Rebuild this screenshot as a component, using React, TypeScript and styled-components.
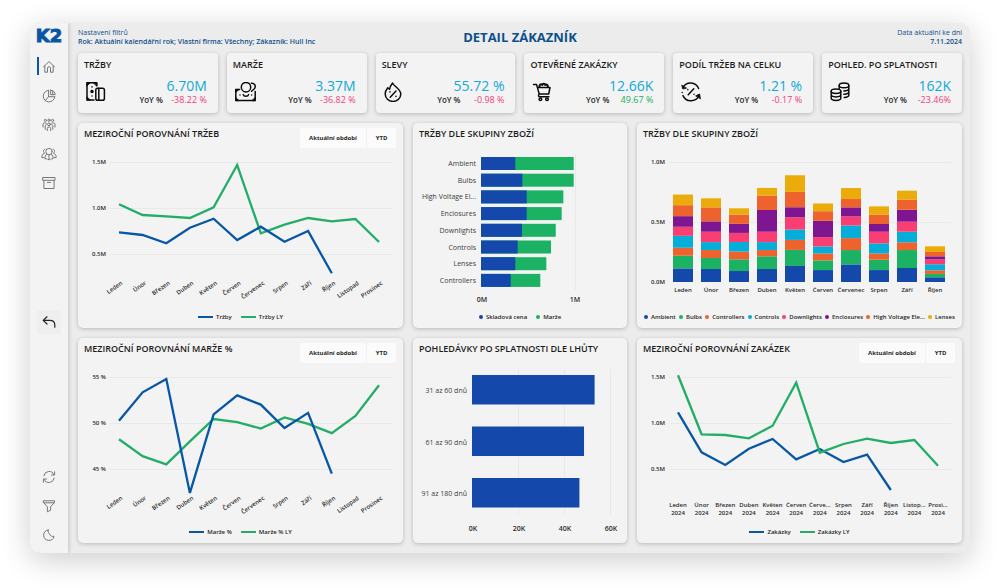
import React from 'react';
import styled, { createGlobalStyle, css } from 'styled-components';

const color = {
  brand: '#0b55a5',
  heading: '#0f4f8b',
  bar: '#1548ab',
  green: '#1bb263',
  line: '#0757a4',
  lineLy: '#23ad68',
  orange: '#ee632d',
  cyan: '#05aed8',
  pink: '#f83e72',
  purple: '#7e1591',
  yellow: '#ebab0a',
  text: '#262626',
  card: '#f3f3f3',
  canvas: '#ececec',
  grid: '#e9e9e9',
};

const GlobalStyle = createGlobalStyle`
  *, *::before, *::after { box-sizing: border-box; }
  body {
    margin: 0;
    background: #fff;
    color: ${color.text};
    font-family: "Open Sans", "Noto Sans", sans-serif;
    font-size: 7px;
  }
  h1, h2, h3, p, ul, dl, dd { margin: 0; padding: 0; }
  button { font: inherit; color: inherit; border: 0; padding: 0; background: none; cursor: pointer; }
`;

/* ---------- layout ---------- */

const Page = styled.div`
  padding: 23px 30px 35px;
`;

const Window = styled.div`
  display: flex;
  border-radius: 10px;
  overflow: hidden;
  background: ${color.canvas};
  box-shadow: 0 7px 30px rgba(0, 0, 0, 0.2);
`;

const Sidebar = styled.aside`
  flex: 0 0 38px;
  display: flex;
  flex-direction: column;
  justify-content: space-between;
  align-items: center;
  padding: 4px 0;
  background: ${color.card};
  box-shadow: 1px 0 4px rgba(0, 0, 0, 0.18);
`;

const Logo = styled.div`
  height: 25px;
  color: ${color.brand};
  font: 700 18px/18px "DejaVu Sans", sans-serif;
  -webkit-text-stroke: 1px ${color.brand};
  text-align: center;
`;

const Nav = styled.nav`
  display: flex;
  flex-direction: column;
  align-items: center;
`;

const NavButton = styled.button<{ $active?: boolean }>`
  position: relative;
  width: 36px;
  height: 29px;
  display: grid;
  place-items: center;
  color: #777;
  ${(p) =>
    p.$active &&
    css`
      &::before {
        content: '';
        position: absolute;
        left: 6px;
        top: 5px;
        width: 2px;
        height: 18px;
        background: ${color.brand};
      }
    `}
`;

const BackButton = styled.button`
  display: grid;
  place-items: center;
  width: 24px;
  height: 24px;
  margin-bottom: 16px;
  border-radius: 3px;
  background: #eeeeee;
  color: #222;
`;

const Main = styled.main`
  flex: 1;
  min-width: 0;
  padding: 0 8px 10px 10px;
`;

const Header = styled.header`
  display: grid;
  grid-template-columns: 1fr auto 1fr;
  height: 30px;
  padding-top: 5px;
  color: ${color.heading};
`;

const HeaderText = styled.div<{ $right?: boolean }>`
  line-height: 9px;
  text-align: ${(p) => (p.$right ? 'right' : 'left')};
  white-space: nowrap;
  width: 0;
  min-width: 100%;
`;

const HeaderStrong = styled.strong`
  font-weight: 600;
  font-family: "Open Sans", sans-serif;
`;

const PageTitle = styled.h1`
  font-size: 13px;
  line-height: 18px;
  font-weight: 700;
`;

const KpiRow = styled.section`
  display: grid;
  grid-template-columns: repeat(6, 1fr);
  gap: 9px;
  margin-bottom: 10px;
`;

const PanelGrid = styled.section`
  display: grid;
  grid-template-columns: 325fr 214fr 325fr;
  gap: 10px;
`;

/* ---------- cards ---------- */

const cardSurface = css`
  min-width: 0;
  background: ${color.card};
  border-radius: 4px;
  box-shadow: 0 1px 4px rgba(0, 0, 0, 0.22);
`;

const KpiCard = styled.article`
  ${cardSurface}
  padding: 6px 11px 7px 6px;
`;

const CardTitle = styled.h2`
  font-size: 9px;
  line-height: 12px;
  font-weight: 600;
  white-space: nowrap;
  color: #1c1c1c;
`;

const KpiBody = styled.div`
  display: flex;
  align-items: center;
  justify-content: space-between;
  margin-top: 7px;
  padding-left: 2px;
`;

const KpiNumbers = styled.div`
  text-align: right;
`;

const KpiValue = styled.p`
  font-size: 14px;
  line-height: 16px;
  font-weight: 500;
  color: #12a9d6;
`;

const KpiChange = styled.p`
  display: flex;
  font-size: 8px;
  line-height: 12px;
  font-weight: 600;
`;

const Delta = styled.span<{ $up?: boolean }>`
  min-width: 44px;
  font-size: 9px;
  font-weight: 500;
  color: ${(p) => (p.$up ? '#22ad65' : '#f0417a')};
`;

const Panel = styled.article`
  ${cardSurface}
  border-radius: 5px;
`;

const PanelHead = styled.div`
  display: flex;
  justify-content: space-between;
  height: 27px;
  padding: 5px 7px 0 6px;
`;

const Segmented = styled.div`
  display: grid;
  grid-template-columns: 66px 29px;
  gap: 1px;
  height: 20px;
`;

const SegmentButton = styled.button`
  border-radius: 2px;
  background: #fbfbfb;
  font-size: 6px;
  font-weight: 700;
  white-space: nowrap;
`;

const Chart = styled.svg`
  display: block;
  width: 100%;
  height: auto;
`;

const GridLine = styled.line`
  stroke: ${color.grid};
  stroke-width: 1;
  shape-rendering: crispEdges;
`;

const AxisText = styled.text`
  font-size: 7px;
  font-weight: 600;
  fill: #2b2b2b;
`;

const ScaleText = styled.text`
  font-size: 6px;
  font-weight: 600;
  fill: #2b2b2b;
`;

const MonthText = styled(AxisText)`
  font-size: 6px;
`;

const CategoryText = styled.text`
  font-size: 7px;
  font-weight: 500;
  fill: #3c3c3c;
`;

const Legend = styled.ul<{ $spread?: boolean }>`
  display: flex;
  justify-content: ${(p) => (p.$spread ? 'space-between' : 'center')};
  gap: ${(p) => (p.$spread ? '2px' : '9px')};
  height: 23px;
  padding: 0 7px;
  list-style: none;
  line-height: 24px;
  font-size: 6px;
  font-weight: 600;
  white-space: nowrap;
`;

const LegendItem = styled.li`
  display: flex;
  align-items: center;
  gap: 3px;
`;

const LineKey = styled.span<{ $color: string }>`
  width: 15px;
  height: 2px;
  background: ${(p) => p.$color};
`;

const DotKey = styled.span<{ $color: string }>`
  width: 4px;
  height: 4px;
  border-radius: 50%;
  background: ${(p) => p.$color};
`;

/* ---------- icons ---------- */

const SideIcon = ({ children, size = 14 }: { children: React.ReactNode; size?: number }) => (
  <svg width={size} height={size} viewBox="0 0 14 14" fill="none" stroke="currentColor" strokeWidth="1" strokeLinecap="round" strokeLinejoin="round" aria-hidden="true">
    {children}
  </svg>
);

const HomeIcon = () => (
  <SideIcon>
    <path d="M1.5 6.8 7 1.6l5.500 5.200M2.800 5.800V12.200H5.500V8.200a1.500 1.500 0 0 1 3 0V12.200h2.700V5.800" />
  </SideIcon>
);
const PieIcon = () => (
  <SideIcon>
    <path d="M6.600 1.300a5.800 5.800 0 1 0 6.200 6.500M6.600 1.300V7.600L3 12M6.600 7.600 12.800 7.800M8.700 1.200v4.500h4.500A5 5 0 0 0 8.700 1.200zM10.800 2v3.500" />
  </SideIcon>
);
const TeamIcon = () => (
  <SideIcon>
    <circle cx="3.400" cy="2.400" r="1.100" />
    <circle cx="7" cy="2.200" r="1.100" />
    <circle cx="10.600" cy="2.400" r="1.100" />
    <circle cx="7" cy="6.300" r="1.400" />
    <path d="M1 9V6.200C1 4.800 3 4.600 4.400 5.200M13 9V6.200c0-1.400-2-1.600-3.400-1M5.300 12.600V10.400c0-2 3.400-2 3.400 0v2.200M3.200 11.400V8c0-.8.500-1.300 1.200-1.300M10.800 11.400V8c0-.8-.5-1.300-1.200-1.300" />
  </SideIcon>
);
const CustomersIcon = () => (
  <svg width="16" height="14" viewBox="0 0 16 14" fill="none" stroke="currentColor" strokeWidth="1" strokeLinecap="round" strokeLinejoin="round" aria-hidden="true">
    <circle cx="8" cy="4.600" r="3.200" />
    <path d="M4 2.200C2 2.200 1.800 5.400 3.500 6.200M12 2.200c2 0 2.200 3.200.5 4M3.200 6.600C1.200 7.200.8 8.400.8 10.600h2M12.800 6.600c2 .6 2.400 1.800 2.400 4h-2M5.600 7.400C4.300 8.200 3.900 9.400 3.900 11.800h1.600M10.400 7.400c1.300.8 1.700 2 1.700 4.400h-1.600M8 8v4.600M6.800 12.600h2.400" />
  </svg>
);
const ArchiveIcon = () => (
  <SideIcon>
    <path d="M1 1.500h12v2.800H1zM1.900 4.300v8.200h10.200V4.300M5.400 6.400h3.200" />
  </SideIcon>
);
const BackIcon = () => (
  <SideIcon>
    <path d="M5 1.800 1.200 5.400 5 9M1.200 5.400h6.600c3 0 5 1.500 5 4.600v2.200" strokeWidth="1.200" />
  </SideIcon>
);
const RefreshIcon = () => (
  <SideIcon>
    <path d="M1.800 5.800A5.400 5.400 0 0 1 12 4.600M12.600 1.800v3.200H9.400M12.200 8.200A5.400 5.400 0 0 1 2 9.400M1.400 12.200V9h3.200" />
  </SideIcon>
);
const FilterIcon = () => (
  <SideIcon>
    <path d="M1.500 1.800h11v1.700L8.600 7.800v3.400l-3.200 1.600v-5L1.500 3.500zM2 3.800h10" />
  </SideIcon>
);
const MoonIcon = () => (
  <SideIcon>
    <path d="M6.200 2A5.200 5.200 0 1 0 12 8.200 3.300 3.300 0 0 1 7.600 6C6.300 5 5.800 3.600 6.200 2z" />
  </SideIcon>
);

const KpiIcon = ({ children }: { children: React.ReactNode }) => (
  <svg width="22" height="20" viewBox="0 0 22 20" fill="none" stroke="#0c0c0c" strokeWidth="1.500" strokeLinecap="round" strokeLinejoin="round" aria-hidden="true">
    {children}
  </svg>
);

const NotesIcon = () => (
  <KpiIcon>
    <path d="M10.800 3.600V.8H1V18h7" />
    <path d="M1 .8h3.200L1 4zM7.600.8h3.200V4zM1 18v-3.200L4.200 18z" fill="#0c0c0c" strokeWidth=".8" />
    <circle cx="6" cy="9.400" r="1" fill="#0c0c0c" />
    <path d="M6 4.800v.1M6 14v.1" />
    <rect x="9.800" y="6.200" width="8.600" height="12" rx="1.800" />
    <path d="M12.800 6.200v12" />
  </KpiIcon>
);
const CashIcon = () => (
  <KpiIcon>
    <path d="M4.600 7.400H.8v11h19.400V9.600" />
    <path d="M.8 7.400H4L.8 10.400zM.8 18.400v-3l3 3zM20.200 18.400v-3l-3 3z" fill="#0c0c0c" strokeWidth=".8" />
    <circle cx="11" cy="5.200" r="4.700" />
    <path d="M16.400 1.200c3.400-.2 4.800 3 3 5.600l-2.800 2.400" />
    <path d="M8.200 12.600c.6 2.200 4.800 2.200 5.400 0M5 13v.1M16.600 13v.1" />
  </KpiIcon>
);
const DiscountIcon = () => (
  <KpiIcon>
    <path d="M8.600 1c.4 2.600 8.200 5.800 8.200 11a7.800 7.400 0 0 1-15.600 0c0-3 1.200-4.600 2.600-6.200l1.800 1.400C5.800 5 7 3 8.600 1z" />
    <path d="M12 9l-5.800 6.200M6 9.800v.2M12 14.200v.2" />
  </KpiIcon>
);
const CartIcon = () => (
  <KpiIcon>
    <path d="M1.500 2.400h3l2.800 9.800M5.300 5.500h12.700l-1.300 6.500H7.300c-1.400 1.400-.8 2.800.6 2.800h9" />
    <path d="M7.500 5C7 2.800 9 1.400 10.200 3 11 1.200 12.800 1.400 13.200 3c1.600-1.200 3 .4 2.600 2" strokeWidth="2" />
    <circle cx="8.400" cy="17.200" r="1.300" fill="#f3f3f3" />
    <circle cx="15" cy="17.200" r="1.300" fill="#f3f3f3" />
  </KpiIcon>
);
const ShareIcon = () => (
  <KpiIcon>
    <path d="M2 5.500A8.600 8.400 0 0 1 17.600 6.500M18.200 12.600A8.600 8.400 0 0 1 2 13.600M1.200 10.500v.1" />
    <path d="M.8 3.400l1 3.600 3.400-.8zM19.400 16.500l-.8-4.400-3.700 1.600z" fill="#0c0c0c" strokeWidth=".8" />
    <path d="M12.800 6.800l-5.600 6M6.800 7.600v.1M13 12.200v.1" />
  </KpiIcon>
);
const CoinsIcon = () => (
  <KpiIcon>
    <ellipse cx="14" cy="3.400" rx="4.800" ry="2.300" />
    <path d="M9.200 3.400v3.200M18.800 3.400v9.600c0 1.500-2 2.400-4.600 2.400M18.800 6.600c0 1.500-2.200 2.400-5 2.400M18.800 9.800c0 1.500-2.200 2.400-5 2.400" />
    <ellipse cx="6" cy="9.200" rx="4.800" ry="2.200" />
    <path d="M1.200 9.200v6.800c0 1.400 2.200 2.400 4.800 2.400s4.800-1 4.800-2.400V9.200M1.200 12.600c0 1.400 2.200 2.300 4.800 2.300s4.800-.9 4.800-2.300" />
  </KpiIcon>
);

/* ---------- data ---------- */

const months = ['Leden', 'Únor', 'Březen', 'Duben', 'Květen', 'Červen', 'Červenec', 'Srpen', 'Září', 'Říjen', 'Listopad', 'Prosinec'];
const shortMonths = months.map((m) => (m.length > 6 ? `${m.slice(0, m === 'Listopad' ? 6 : 5)}...` : m));

const kpis = [
  { title: 'TRŽBY', value: '6.70M', delta: '-38.22 %', icon: <NotesIcon /> },
  { title: 'MARŽE', value: '3.37M', delta: '-36.82 %', icon: <CashIcon /> },
  { title: 'SLEVY', value: '55.72 %', delta: '-0.98 %', icon: <DiscountIcon /> },
  { title: 'OTEVŘENÉ ZAKÁZKY', value: '12.66K', delta: '49.67 %', up: true, icon: <CartIcon /> },
  { title: 'PODÍL TRŽEB NA CELKU', value: '1.21 %', delta: '-0.17 %', icon: <ShareIcon /> },
  { title: 'POHLED. PO SPLATNOSTI', value: '162K', delta: '-23.46%', icon: <CoinsIcon /> },
];

const sales = [0.736, 0.707, 0.616, 0.786, 0.884, 0.652, 0.797, 0.634, 0.75, 0.29];
const salesLy = [1.04, 0.924, 0.91, 0.891, 1.007, 1.467, 0.725, 0.818, 0.891, 0.855, 0.88, 0.63];
const margin = [50.25, 53.34, 54.78, 42.4, 50.95, 53, 52, 49.46, 51.1, 44.5];
const marginLy = [48.23, 46.4, 45.5, 48, 50.43, 50.1, 49.4, 50.6, 49.9, 48.9, 50.76, 54.1];
const orders = [1.116, 0.682, 0.543, 0.721, 0.826, 0.605, 0.717, 0.576, 0.655, 0.272];
const ordersLy = [1.52, 0.877, 0.87, 0.834, 0.971, 1.438, 0.677, 0.772, 0.829, 0.783, 0.815, 0.536];

const groups: [string, number, number][] = [
  ['Ambient', 0.365, 0.986],
  ['Bulbs', 0.44, 0.986],
  ['High Voltage El...', 0.486, 0.876],
  ['Enclosures', 0.486, 0.858],
  ['Downlights', 0.436, 0.795],
  ['Controls', 0.39, 0.745],
  ['Lenses', 0.365, 0.695],
  ['Controllers', 0.316, 0.631],
];

const series: [string, string][] = [
  ['Ambient', color.bar],
  ['Bulbs', color.green],
  ['Controllers', color.orange],
  ['Controls', color.cyan],
  ['Downlights', color.pink],
  ['Enclosures', color.purple],
  ['High Voltage Ele...', color.orange],
  ['Lenses', color.yellow],
];

const stacks = [
  [113, 105, 66, 99, 75, 88, 91, 88],
  [108, 91, 66, 66, 86, 86, 116, 75],
  [91, 97, 64, 80, 75, 75, 77, 52],
  [108, 105, 52, 66, 86, 180, 119, 64],
  [133, 133, 83, 86, 102, 83, 127, 138],
  [99, 80, 58, 58, 77, 135, 80, 64],
  [146, 119, 99, 105, 75, 75, 69, 91],
  [99, 86, 52, 83, 97, 64, 77, 69],
  [116, 149, 64, 88, 83, 99, 83, 75],
  [39, 28, 30, 50, 41, 25, 36, 47],
];

const overdue: [string, number][] = [
  ['31 az 60 dnů', 53.3],
  ['61 az 90 dnů', 48.7],
  ['91 az 180 dnů', 46.7],
];

/* ---------- charts ---------- */

type LineChartProps = {
  label: string;
  ticks: string[];
  top: number;
  step: number;
  current: number[];
  previous: number[];
  withYear?: boolean;
};

const MONTH_START = 41;
const MONTH_STEP = 23.64;
const TICK_GAP = 46;

function LineChart({ label, ticks, top, step, current, previous, withYear }: LineChartProps) {
  const monthX = (i: number) => MONTH_START + i * MONTH_STEP;
  const path = (values: number[]) =>
    values.map((v, i) => `${monthX(i).toFixed(1)},${(12 + ((top - v) / step) * TICK_GAP).toFixed(1)}`).join(' ');
  return (
    <Chart viewBox="0 0 325 155" role="img" aria-label={label}>
      {ticks.map((t, i) => (
        <g key={t}>
          <GridLine x1={32} x2={314} y1={12 + i * TICK_GAP} y2={12 + i * TICK_GAP} />
          <ScaleText x={28} y={14 + i * TICK_GAP} textAnchor="end">
            {t}
          </ScaleText>
        </g>
      ))}
      <polyline points={path(withYear ? current : previous)} fill="none" stroke={withYear ? color.line : color.lineLy} strokeWidth="2.300" strokeLinejoin="miter" />
      <polyline points={path(withYear ? previous : current)} fill="none" stroke={withYear ? color.lineLy : color.line} strokeWidth="2.300" strokeLinejoin="miter" />
      {months.map((m, i) =>
        withYear ? (
          <MonthText key={m} textAnchor="middle">
            <tspan x={monthX(i)} y={142}>
              {shortMonths[i]}
            </tspan>
            <tspan x={monthX(i)} y={150}>
              2024
            </tspan>
          </MonthText>
        ) : (
          <MonthText key={m} textAnchor="end" transform={`translate(${monthX(i) + 4} 134) rotate(-35)`}>
            {m}
          </MonthText>
        ),
      )}
    </Chart>
  );
}

function GroupBars() {
  return (
    <Chart viewBox="0 0 214 155" role="img" aria-label="Skladová cena a marže dle skupiny zboží">
      <GridLine x1={162} x2={162} y1={4} y2={140} />
      {groups.map(([name, cost, total], i) => {
        const y = 7 + i * 16.7;
        return (
          <g key={name}>
            <CategoryText x={63} y={y + 9} textAnchor="end">
              {name}
            </CategoryText>
            <rect x={68} y={y} width={total * 94} height={13} fill={color.green} />
            <rect x={68} y={y} width={cost * 94} height={13} fill={color.bar} />
          </g>
        );
      })}
      <AxisText x={69} y={152} textAnchor="middle">
        0M
      </AxisText>
      <AxisText x={162} y={152} textAnchor="middle">
        1M
      </AxisText>
    </Chart>
  );
}

function StackedColumns() {
  return (
    <Chart viewBox="0 0 325 155" role="img" aria-label="Tržby dle skupiny zboží po měsících">
      {['1.0M', '0.5M', '0.0M'].map((t, i) => (
        <g key={t}>
          {i < 2 && <GridLine x1={32} x2={314} y1={12 + i * 60} y2={12 + i * 60} />}
          <ScaleText x={28} y={14 + i * 60} textAnchor="end">
            {t}
          </ScaleText>
        </g>
      ))}
      {stacks.map((stack, i) => {
        let y = 132;
        return (
          <g key={months[i]}>
            {stack.map((v, s) => {
              const h = v * 0.1206;
              y -= h;
              return <rect key={s} x={36 + i * 28} y={y} width={20} height={h} fill={series[s][1]} />;
            })}
            <MonthText x={46 + i * 28} y={142} textAnchor="middle">
              {months[i]}
            </MonthText>
          </g>
        );
      })}
    </Chart>
  );
}

function OverdueBars() {
  return (
    <Chart viewBox="0 0 214 178" role="img" aria-label="Pohledávky po splatnosti dle lhůty">
      {[0, 20, 40, 60].map((k) => (
        <g key={k}>
          {k > 0 && <GridLine x1={59 + k * 2.3} x2={59 + k * 2.3} y1={4} y2={150} />}
          <AxisText x={60 + k * 2.3} y={166} textAnchor="middle">
            {k}K
          </AxisText>
        </g>
      ))}
      {overdue.map(([name, v], i) => (
        <g key={name}>
          <CategoryText x={54} y={28 + i * 51.5} textAnchor="end">
            {name}
          </CategoryText>
          <rect x={59} y={10 + i * 51.5} width={v * 2.3} height={29.5} fill={color.bar} />
        </g>
      ))}
    </Chart>
  );
}

/* ---------- composed parts ---------- */

function LineLegend({ current, previous }: { current: string; previous: string }) {
  return (
    <Legend>
      <LegendItem>
        <LineKey $color={color.line} />
        {current}
      </LegendItem>
      <LegendItem>
        <LineKey $color={color.lineLy} />
        {previous}
      </LegendItem>
    </Legend>
  );
}

function DotLegend({ items, spread }: { items: [string, string][]; spread?: boolean }) {
  return (
    <Legend $spread={spread}>
      {items.map(([name, c]) => (
        <LegendItem key={name}>
          <DotKey $color={c} />
          {name}
        </LegendItem>
      ))}
    </Legend>
  );
}

function PanelCard({ title, periods, children }: { title: string; periods?: boolean; children: React.ReactNode }) {
  return (
    <Panel>
      <PanelHead>
        <CardTitle>{title}</CardTitle>
        {periods && (
          <Segmented>
            <SegmentButton type="button">Aktuální období</SegmentButton>
            <SegmentButton type="button">YTD</SegmentButton>
          </Segmented>
        )}
      </PanelHead>
      {children}
    </Panel>
  );
}

export default function App() {
  return (
    <>
      <GlobalStyle />
      <Page>
        <Window>
          <Sidebar>
            <Nav aria-label="Přehledy">
              <Logo>K2</Logo>
              <NavButton type="button" aria-label="Domů" $active>
                <HomeIcon />
              </NavButton>
              <NavButton type="button" aria-label="Analýza">
                <PieIcon />
              </NavButton>
              <NavButton type="button" aria-label="Tým">
                <TeamIcon />
              </NavButton>
              <NavButton type="button" aria-label="Zákazníci">
                <CustomersIcon />
              </NavButton>
              <NavButton type="button" aria-label="Zboží">
                <ArchiveIcon />
              </NavButton>
            </Nav>
            <BackButton type="button" aria-label="Zpět">
              <BackIcon />
            </BackButton>
            <Nav aria-label="Nástroje">
              <NavButton type="button" aria-label="Obnovit">
                <RefreshIcon />
              </NavButton>
              <NavButton type="button" aria-label="Filtr">
                <FilterIcon />
              </NavButton>
              <NavButton type="button" aria-label="Tmavý režim">
                <MoonIcon />
              </NavButton>
            </Nav>
          </Sidebar>
          <Main>
            <Header>
              <HeaderText>
                <p>Nastavení filtrů</p>
                <HeaderStrong>Rok: Aktuální kalendářní rok; Vlastní firma: Všechny; Zákazník: Hull Inc</HeaderStrong>
              </HeaderText>
              <PageTitle>DETAIL ZÁKAZNÍK</PageTitle>
              <HeaderText $right>
                <p>Data aktuální ke dni</p>
                <HeaderStrong>7.11.2024</HeaderStrong>
              </HeaderText>
            </Header>
            <KpiRow>
              {kpis.map((k) => (
                <KpiCard key={k.title}>
                  <CardTitle>{k.title}</CardTitle>
                  <KpiBody>
                    {k.icon}
                    <KpiNumbers>
                      <KpiValue>{k.value}</KpiValue>
                      <KpiChange>
                        <span>YoY %</span>
                        <Delta $up={k.up}>{k.delta}</Delta>
                      </KpiChange>
                    </KpiNumbers>
                  </KpiBody>
                </KpiCard>
              ))}
            </KpiRow>
            <PanelGrid>
              <PanelCard title="MEZIROČNÍ POROVNÁNÍ TRŽEB" periods>
                <LineChart label="Meziroční porovnání tržeb" ticks={['1.5M', '1.0M', '0.5M']} top={1.5} step={0.5} current={sales} previous={salesLy} />
                <LineLegend current="Tržby" previous="Tržby LY" />
              </PanelCard>
              <PanelCard title="TRŽBY DLE SKUPINY ZBOŽÍ">
                <GroupBars />
                <DotLegend
                  items={[
                    ['Skladová cena', color.bar],
                    ['Marže', color.green],
                  ]}
                />
              </PanelCard>
              <PanelCard title="TRŽBY DLE SKUPINY ZBOŽÍ">
                <StackedColumns />
                <DotLegend items={series} spread />
              </PanelCard>
              <PanelCard title="MEZIROČNÍ POROVNÁNÍ MARŽE %" periods>
                <LineChart label="Meziroční porovnání marže" ticks={['55 %', '50 %', '45 %']} top={55} step={5} current={margin} previous={marginLy} />
                <LineLegend current="Marže %" previous="Marže % LY" />
              </PanelCard>
              <PanelCard title="POHLEDÁVKY PO SPLATNOSTI DLE LHŮTY">
                <OverdueBars />
              </PanelCard>
              <PanelCard title="MEZIROČNÍ POROVNÁNÍ ZAKÁZEK" periods>
                <LineChart label="Meziroční porovnání zakázek" ticks={['1.5M', '1.0M', '0.5M']} top={1.5} step={0.5} current={orders} previous={ordersLy} withYear />
                <LineLegend current="Zakázky" previous="Zakázky LY" />
              </PanelCard>
            </PanelGrid>
          </Main>
        </Window>
      </Page>
    </>
  );
}
